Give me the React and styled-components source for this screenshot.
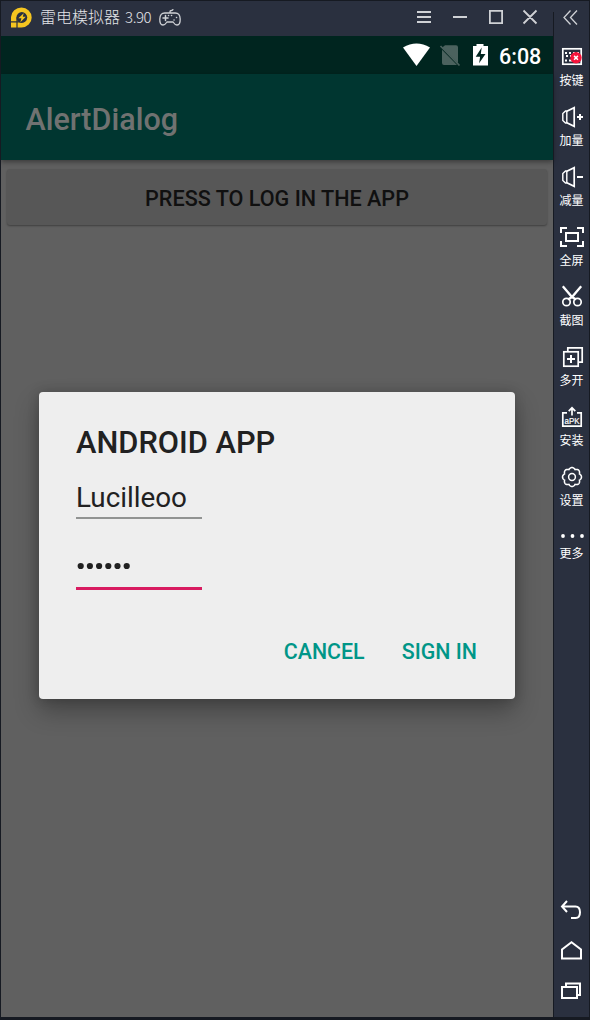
import React from 'react';
import styled, { createGlobalStyle } from 'styled-components';

const GlobalStyle = createGlobalStyle`
  * { box-sizing: border-box; }
  body { margin: 0; background: #14181f; font-family: Roboto, "Noto Sans CJK SC", sans-serif; }
`;

const Window = styled.div`
  width: 590px;
  height: 1020px;
  display: flex;
  flex-direction: column;
  background: #2a303f;
  border: solid #161a22;
  border-width: 1px 1px 3px;
  overflow: hidden;
`;

const TopBar = styled.header`
  height: 35px;
  flex: none;
  display: flex;
  align-items: center;
  padding: 0 0 2px 9px;
  color: #cfd1d5;
`;

const Brand = styled.div`
  flex: 1;
  display: flex;
  align-items: center;
`;

const AppName = styled.span`
  margin: -2px 7px 0 7px;
  font: 300 16px/24px "Noto Sans CJK SC", sans-serif;
  color: #e2e4e8;
  white-space: nowrap;
`;

const Version = styled.span`
  margin-left: 5px;
  font-size: 15px;
  letter-spacing: -0.4px;
`;

const Body = styled.div`
  flex: 1;
  min-height: 0;
  display: flex;
`;

const Screen = styled.main`
  width: 552px;
  display: flex;
  flex-direction: column;
  background: #606060;
`;

const StatusBar = styled.div`
  height: 38px;
  flex: none;
  display: flex;
  justify-content: flex-end;
  align-items: center;
  padding-right: 12px;
  background: #00251f;
  color: #fff;
`;

const Clock = styled.span`
  width: 42px;
  margin-left: 10px;
  font-size: 21.5px;
  line-height: 38px;
  font-weight: 500;
  padding-top: 3px;
  white-space: nowrap;
`;

const AppBar = styled.div`
  height: 86px;
  flex: none;
  padding: 3px 24.5px 0;
  background: #003630;
  color: #707271;
  font-size: 30.5px;
  line-height: 86px;
  font-weight: 500;
  box-shadow: 0 2px 5px rgba(0, 0, 0, 0.4);
`;

const LoginButton = styled.button`
  height: 56px;
  flex: none;
  margin: 9px 6px 0;
  padding: 3px 0 0;
  border: 0;
  border-radius: 3px;
  background: #575757;
  box-shadow: 0 1px 2px rgba(0, 0, 0, 0.35);
  color: #101010;
  font: 500 21.6px/54px Roboto, sans-serif;
`;

const Dialog = styled.section`
  width: 476px;
  height: 307px;
  flex: none;
  margin: 167px 0 0 38px;
  padding: 30px 37px 0;
  display: flex;
  flex-direction: column;
  background: #eee;
  border-radius: 4px;
  box-shadow: 0 12px 24px rgba(0, 0, 0, 0.3), 0 0 12px rgba(0, 0, 0, 0.18);
  color: #212121;
`;

const DialogTitle = styled.h1`
  margin: 0;
  height: 42px;
  font-size: 30.8px;
  line-height: 42px;
  font-weight: 500;
`;

const Field = styled.div`
  width: 126px;
  height: ${(p) => p.$height}px;
  padding-top: ${(p) => p.$top}px;
  border-bottom: ${(p) => (p.$active ? '3px solid #d81b60' : '2px solid #919392')};
  font-size: 27.8px;
  line-height: 36px;
  white-space: nowrap;
`;

const Dots = styled.svg`
  display: block;
`;

const Actions = styled.div`
  display: flex;
  justify-content: flex-end;
  gap: 37px;
  margin: 46px 1px 0 0;
`;

const Action = styled.button`
  padding: 0;
  border: 0;
  background: none;
  color: #009688;
  font: 500 21.4px/32px Roboto, sans-serif;
`;

const Sidebar = styled.aside`
  width: 36px;
  height: calc(100% + 24px);
  margin-top: -24px;
  display: flex;
  flex-direction: column;
  border-left: 1px solid #161a22;
  color: #fff;
`;

const Collapse = styled.div`
  height: 33px;
  flex: none;
`;

const Tool = styled.div`
  height: 60px;
  flex: none;
  display: flex;
  flex-direction: column;
  align-items: center;
`;

const Label = styled.span`
  font: 12px/${(p) => p.$line || 22}px "Noto Sans CJK SC", sans-serif;
  white-space: nowrap;
`;

const Navigation = styled.nav`
  margin-top: auto;
  display: flex;
  flex-direction: column;
  padding-bottom: 6px;
`;

const Glyph = styled.svg`
  display: block;
  flex: none;
  fill: none;
  stroke: currentColor;
  stroke-width: ${(p) => p.$weight || 1.7};
`;

const Icon = ({ w = 36, h = 24, children, weight }) => (
  <Glyph width={w} height={h} viewBox={`0 0 ${w} ${h}`} $weight={weight}>{children}</Glyph>
);

const speaker = (
  <>
    <path d="M12.8 6.3L20.2 2.7V21.3L12.8 17.7" />
    <path d="M12.8 5.8V18.2M12.8 6H11.5L8.8 8.6V15.4L11.5 18H12.8" strokeWidth="1.4" />
  </>
);

const gearPath = (() => {
  const steps = 128;
  const points = Array.from({ length: steps }, (_, i) => {
    const a = (i / steps) * Math.PI * 2;
    const r = 8 + 1.5 * Math.abs(Math.cos(a * 4));
    return `${(18 + r * Math.cos(a)).toFixed(2)} ${(12 + r * Math.sin(a)).toFixed(2)}`;
  });
  return `M${points.join('L')}Z`;
})();

const tools = [
  ['按键', <>
    <rect x="8.8" y="3.8" width="18.4" height="15.4" />
    <path d="M11 8h2m2 0h2m2 0h2m2 0h2M12 11h2m2 0h2M11 15.5h2m2 0h5" strokeWidth="2" />
    <circle cx="22" cy="12.8" r="5.7" fill="#f5143b" stroke="none" />
    <path d="M20.1 10.9l3.8 3.8m0-3.8l-3.8 3.8" strokeWidth="1.5" />
  </>],
  ['加量', <>{speaker}<path d="M23 12h6M26 9v6" strokeWidth="2" /></>],
  ['减量', <>{speaker}<path d="M23 12h6" strokeWidth="2" /></>],
  ['全屏', <>
    <path d="M7 8V3H13M23 3h6V8M29 16v5H23M13 21H7V16" strokeWidth="2" />
    <rect x="12" y="8" width="12" height="8" strokeWidth="2" />
  </>],
  ['截图', <>
    <path d="M8.8 1.3L18 12l4 2.5M27.2 1.3L18 12l-4 2.5" strokeWidth="2.3" />
    <circle cx="12.5" cy="17" r="3.7" /><circle cx="23.5" cy="17" r="3.7" />
  </>],
  ['多开', <>
    <path d="M13.8 6V2.8h14.4v14.4H25" />
    <rect x="9.8" y="6.8" width="14.4" height="14.4" />
    <path d="M17 10v8M13 14h8" strokeWidth="2" />
  </>],
  ['安装', <>
    <path d="M13 7.8H8.8v13.4h18.4V7.8H23M18 10.5V3M14.7 6.1L18 2.8l3.3 3.3" />
    <text x="10.6" y="18.5" fontSize="8.5" fontFamily="Liberation Sans" textLength="15" lengthAdjust="spacingAndGlyphs" fill="#fff" stroke="#fff" strokeWidth=".2">aPK</text>
  </>],
  ['设置', <><path d={gearPath} strokeWidth="1.5" /><circle cx="18" cy="12" r="3.4" strokeWidth="1.5" /></>],
];

export default function App() {
  return (
    <>
      <GlobalStyle />
      <Window>
        <TopBar>
          <Brand>
            <Icon w={23} h={24}>
              <path d="M1 21.5V11A10.5 9.9 0 0 1 11.5 1.5A10.2 10 0 0 1 11.5 21.5Z" fill="#f5c520" stroke="none" />
              <circle cx="11.8" cy="11.5" r="5.4" fill="#2a303f" stroke="none" />
              <path d="M7 22V11.5M1 15.9H12" stroke="#2a303f" strokeWidth="1.2" />
              <path d="M13.7 7.3L8.4 12.2h3l-1 4 5.4-5.4h-3Z" fill="#f5c520" stroke="none" />
            </Icon>
            <AppName>雷电模拟器<Version>3.90</Version></AppName>
            <Icon w={24} h={20} weight={1.3}>
              <path d="M12 5V3.5Q12 2.5 13.5 2.5T15 1M7 5Q2 4.8 1.8 11Q1.6 17 5 17Q7 17 9 14H15Q17 17 19 17Q22.4 17 22.2 11Q22 4.8 17 5Z" />
              <path d="M5 10h5M7.5 7.5v5M16 12h.1M18.5 9.5h.1M10.5 7.5h.1M13.5 7.5h.1" strokeLinecap="round" strokeWidth="1.5" />
            </Icon>
          </Brand>
          <Icon w={173} h={33} weight={1.8}>
            <path d="M1 11h14M1 16h14M1 21h14M37 16h14M73.9 9.9h12.2v12.2H73.9ZM107.5 9.5l13 13m0-13l-13 13" />
            <path d="M154.5 9.5l-6.5 7 6.5 7M161 9.5l-6.5 7 6.5 7" strokeWidth="1.3" />
          </Icon>
        </TopBar>
        <Body>
          <Screen>
            <StatusBar>
              <Icon w={86} h={30}>
                <path d="M0 7.5Q13.5-.3 27 7.5L13.5 26Z" fill="#fff" stroke="none" />
                <path d="M42 5.2h11q2 0 2 2v16L39 7.8ZM39 9.8L54 25H41q-2 0-2-2Z" fill="#4b625e" stroke="none" />
                <path d="M37.5 6l19 19.5" stroke="#4b625e" strokeWidth="1.7" />
                <path d="M70 6h3.5V4h7v2H85v19.5H70Z" fill="#fff" stroke="none" />
                <path d="M78.7 7.5l-6 9.2h4.4l-1 6.5 6.4-9.2h-4.7Z" fill="#00251f" stroke="none" />
              </Icon>
              <Clock>6:08</Clock>
            </StatusBar>
            <AppBar>AlertDialog</AppBar>
            <LoginButton>PRESS TO LOG IN THE APP</LoginButton>
            <Dialog>
              <DialogTitle>ANDROID APP</DialogTitle>
              <Field $height={55} $top={16}>Lucilleoo</Field>
              <Field $height={71} $top={35} $active>
                <Dots width="60" height="24" viewBox="0 0 60 24" fill="#212121">
                  {[0, 1, 2, 3, 4, 5].map((i) => <circle key={i} cx={4.7 + i * 9.2} cy="12" r="3.1" />)}
                </Dots>
              </Field>
              <Actions><Action>CANCEL</Action><Action>SIGN IN</Action></Actions>
            </Dialog>
          </Screen>
          <Sidebar>
            <Collapse />
            {tools.map(([name, drawing]) => (
              <Tool key={name}><Icon>{drawing}</Icon><Label>{name}</Label></Tool>
            ))}
            <Tool>
              <Icon h={20}><g fill="#fff" stroke="none"><circle cx="9" cy="11" r="1.9" /><circle cx="18.5" cy="11" r="1.9" /><circle cx="28" cy="11" r="1.9" /></g></Icon>
              <Label $line={16}>更多</Label>
            </Tool>
            <Navigation>
              <Icon h={40} weight={2}><path d="M13 11l-5 5.5 5 5.5M8 16.5h13.5q4.5 0 4.5 5.8t-4.5 5.7H17" transform="translate(0 -1)" /></Icon>
              <Icon h={40} weight={2}><path d="M8 27.5V18.5l9.5-7.2 9.5 7.2V27.5Z" /></Icon>
              <Icon h={40} weight={2}><path d="M8 16h15v11H8ZM12 16v-3.5h14V24h-3" /></Icon>
            </Navigation>
          </Sidebar>
        </Body>
      </Window>
    </>
  );
}
